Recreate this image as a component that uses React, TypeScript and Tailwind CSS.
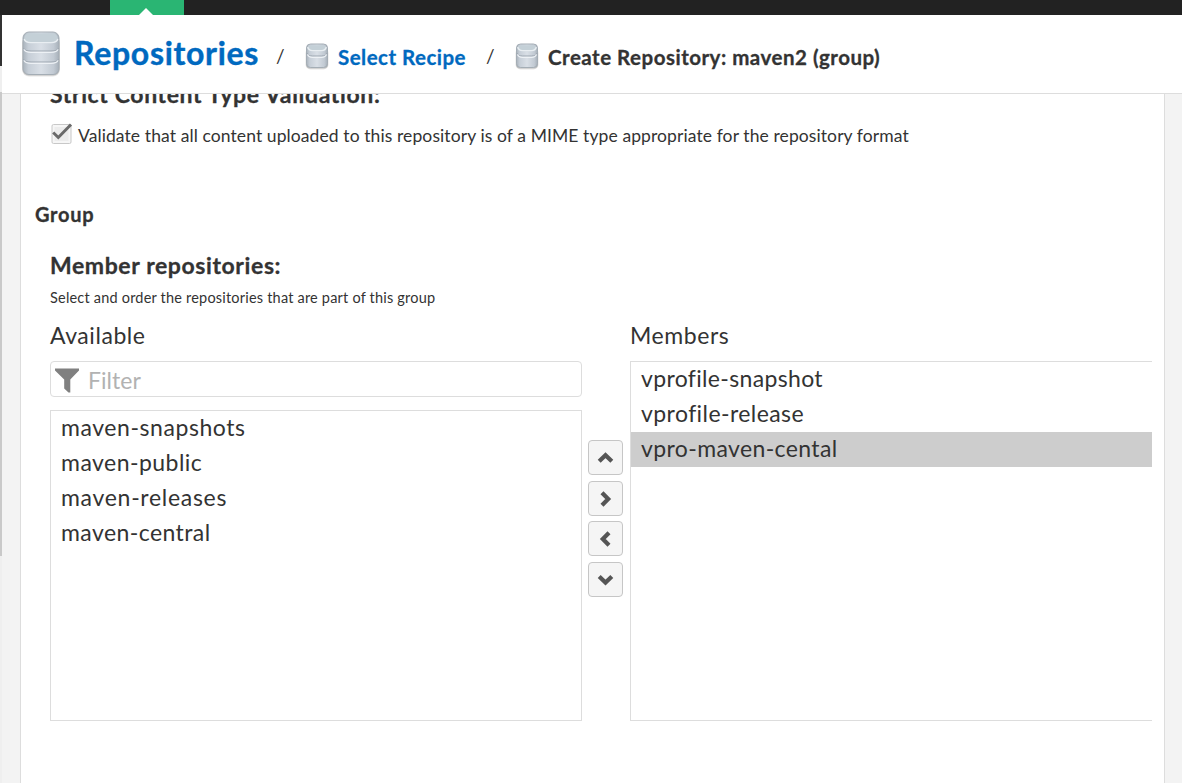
import React, { useId } from "react";

function Database({ discs, className }: { discs: 2 | 3; className: string }) {
  const id = useId();
  const large = discs === 3;
  const w = large ? 40 : 24;
  const h = large ? 48 : 27;
  const bottom = large ? 43 : 24;
  const seams = large ? [20, 31] : [13];
  const l = large ? 2 : 1.5;
  const r = w - l;
  const curve = large ? 6 : 4;
  const lid = large ? 10 : 6;
  return (
    <svg className={className} viewBox={`0 0 ${w} ${h}`} width={w} height={h}>
      <defs>
        <linearGradient id={id} x1="0" x2="1" y1="0" y2="0">
          <stop offset="0" stopColor="#aab3bc" />
          <stop offset="0.15" stopColor="#c6ced7" />
          <stop offset="0.5" stopColor="#d9dfe6" />
          <stop offset="0.85" stopColor="#c2cad3" />
          <stop offset="1" stopColor="#a7b0b9" />
        </linearGradient>
      </defs>
      <rect x={l - 1} y={5} width={r - l + 2} height={bottom - 2.5} rx={curve + 1} fill="#000" opacity="0.1" />
      <rect x={l - 0.5} y={5} width={r - l + 1} height={bottom - 3.5} rx={curve} fill="#000" opacity="0.16" />
      <rect x={l} y={1} width={r - l} height={bottom - 0.5} rx={curve} fill={`url(#${id})`} stroke="#a4adb5" strokeWidth="1" />
      <rect x={l + 1.2} y={2.2} width={r - l - 2.4} height={lid} rx={lid / 2} fill="#c4d0d7" />
      <path d={`M${l + 1.2} ${lid - 2} Q${l + 2} ${lid + 1.6} ${l + curve + 2} ${lid + 1.6} H${r - curve - 2} Q${r - 2} ${lid + 1.6} ${r - 1.2} ${lid - 2}`} fill="none" stroke="#e9eef2" strokeWidth="1.3" />
      {seams.map((y) => (
        <g key={y} fill="none">
          <path d={`M${l + 0.5} ${y - 3} Q${l + 1} ${y} ${l + curve + 2} ${y} H${r - curve - 2} Q${r - 1} ${y} ${r - 0.5} ${y - 3}`} stroke="#9da6b0" strokeWidth="1" />
          <path d={`M${l + 1} ${y - 1.6} Q${l + 2} ${y + 1.3} ${l + curve + 2} ${y + 1.3} H${r - curve - 2} Q${r - 2} ${y + 1.3} ${r - 1} ${y - 1.6}`} stroke="#edf1f5" strokeWidth="1.3" />
        </g>
      ))}
    </svg>
  );
}

function Slash({ className }: { className: string }) {
  return (
    <span className={`mt-[27px] text-[19px] leading-[28px] ${className}`}>/</span>
  );
}

const chevrons = [
  { name: "up", d: "M11.2 21.3 L17.5 15.2 L23.8 21.3" },
  { name: "right", d: "M14 11.7 L20.2 18 L14 24.3" },
  { name: "left", d: "M21 11.7 L14.8 18 L21 24.3" },
  { name: "down", d: "M11.2 14.5 L17.5 20.6 L23.8 14.5" },
];

const available = [
  { name: "maven-snapshots", track: "tracking-[0.56px]" },
  { name: "maven-public", track: "tracking-[0.46px]" },
  { name: "maven-releases", track: "tracking-[0.7px]" },
  { name: "maven-central", track: "tracking-[0.42px]" },
];

const members = [
  { name: "vprofile-snapshot", track: "tracking-[0.34px]", selected: false },
  { name: "vprofile-release", track: "tracking-[0.42px]", selected: false },
  { name: "vpro-maven-cental", track: "tracking-[0.38px]", selected: true },
];

export default function App() {
  return (
    <div className="flex h-[783px] w-[1182px] flex-col overflow-hidden whitespace-nowrap bg-white font-['Lato',sans-serif] text-[#333]">
      <div className="flex h-[15px] shrink-0 bg-[#222] pl-[110px]">
        <div className="flex h-[15px] w-[74px] items-end justify-center bg-[#2ab573]">
          <svg width="14" height="7" viewBox="0 0 14 7" className="mr-[2px]">
            <path d="M0 7 L7 0 L14 7 Z" fill="#fff" />
          </svg>
        </div>
      </div>
      <div className="flex min-h-0 flex-1">
        <div className="flex w-[2px] shrink-0 flex-col bg-[#efefef]">
          <div className="h-[51px] bg-[#333]" />
          <div className="mt-[26px] h-[464px] bg-[#c9c9c9]" />
        </div>
        <div className="flex min-w-0 flex-1 flex-col">
          <header className="flex h-[79px] shrink-0 border-b border-[#ddd] bg-white">
            <Database discs={3} className="ml-[19px] mt-[16px] shrink-0" />
            <a className="ml-[13px] mt-[17px] w-[202px] text-[32px] leading-[42px] font-bold tracking-[0.7px] text-[#0069bf] [-webkit-text-stroke:0.4px]">Repositories</a>
            <Slash className="w-[29px]" />
            <Database discs={2} className="mt-[28px] shrink-0" />
            <a className="ml-[9px] mt-[28px] w-[148px] text-[20.5px] leading-[28px] font-bold tracking-[0.48px] text-[#0069bf] [-webkit-text-stroke:0.3px]">Select Recipe</a>
            <Slash className="w-[29px]" />
            <Database discs={2} className="mt-[28px] shrink-0" />
            <span className="ml-[9px] mt-[28px] text-[20.5px] leading-[28px] font-bold tracking-[0.5px] [-webkit-text-stroke:0.3px]">Create Repository: maven2 (group)</span>
          </header>
          <div className="flex min-h-0 flex-1 bg-[#f3f3f3] pl-[18px] pr-[17px]">
            <main className="flex flex-1 flex-col overflow-hidden border-x border-[#ddd] bg-white pl-[14px] pr-[12px]">
              <h3 className="ml-[15px] mt-[-14px] h-[29px] shrink-0 text-[23px] leading-[28px] font-bold tracking-[0.63px] [-webkit-text-stroke:0.3px]">Strict Content Type Validation:</h3>
              <label className="ml-[15px] mt-[12px] flex h-[28px] shrink-0">
                <svg width="24" height="24" viewBox="0 0 24 24" className="shrink-0">
                  <rect x="2" y="3.5" width="19" height="19" rx="1.5" fill="#f6f6f6" stroke="#c8c8c8" />
                  <rect x="4.5" y="6" width="14" height="14" fill="#ececec" />
                  <path d="M3.2 11.5 L8.3 16.5 L21 3.5" fill="none" stroke="#6a6a6a" strokeWidth="3" />
                </svg>
                <span className="ml-[4px] mt-[1px] text-[17.5px] leading-[28px] tracking-[0.095px]">Validate that all content uploaded to this repository is of a MIME type appropriate for the repository format</span>
              </label>
              <h2 className="mt-[51px] h-[29px] shrink-0 text-[20px] leading-[28px] font-bold tracking-[0.75px] [-webkit-text-stroke:0.3px]">Group</h2>
              <h3 className="ml-[15px] mt-[22px] h-[29px] shrink-0 text-[23px] leading-[28px] font-bold tracking-[0.6px] [-webkit-text-stroke:0.3px]">Member repositories:</h3>
              <p className="ml-[15px] mt-[8px] h-[20px] shrink-0 text-[14.5px] leading-[20px] tracking-[0.2px]">Select and order the repositories that are part of this group</p>
              <div className="ml-[15px] mt-[12px] flex text-[23px]">
                <section className="flex w-[532px] shrink-0 flex-col">
                  <div className="h-[41px] leading-[30px] tracking-[0.55px]">Available</div>
                  <div className="flex h-[36px] items-center rounded-[4px] border border-[#ddd] pl-[4px]">
                    <svg width="25" height="25" viewBox="0 0 25 25" className="mt-[2px] shrink-0">
                      <path d="M0 0.5 H24 V2.5 L15.3 11.5 V24.5 H13.5 L9.2 20.5 V11.5 L0 2.5 Z" fill="#808080" />
                    </svg>
                    <span className="ml-[8px] mt-[3px] tracking-[0.05px] text-[#b2b2b2]">Filter</span>
                  </div>
                  <ul className="mt-[13px] h-[311px] border border-[#ddd]">
                    {available.map((item) => (
                      <li key={item.name} className="h-[35px] pl-[10px] leading-[33px]">
                        <span className={item.track}>{item.name}</span>
                      </li>
                    ))}
                  </ul>
                </section>
                <div className="grid w-[48px] shrink-0 content-start gap-[5.6px] pl-[6px] pt-[120px]">
                  {chevrons.map((c) => (
                    <button key={c.name} aria-label={c.name} className="h-[35px] w-[35px] rounded-[4px] border border-[#c6c6c6] bg-[#f5f5f5]">
                      <svg width="35" height="35" viewBox="0 0 35 35" className="-ml-px -mt-px">
                        <path d={c.d} fill="none" stroke="#555" strokeWidth="4.2" />
                      </svg>
                    </button>
                  ))}
                </div>
                <section className="flex flex-1 flex-col">
                  <div className="h-[41px] leading-[30px] tracking-[0.56px]">Members</div>
                  <ul className="h-[360px] border-y border-l border-[#ddd]">
                    {members.map((item) => (
                      <li key={item.name} className={item.selected ? "h-[35px] bg-[#cdcdcd] pl-[10px] leading-[33px]" : "h-[35px] pl-[10px] leading-[33px]"}>
                        <span className={item.track}>{item.name}</span>
                      </li>
                    ))}
                  </ul>
                </section>
              </div>
            </main>
          </div>
        </div>
      </div>
    </div>
  );
}
